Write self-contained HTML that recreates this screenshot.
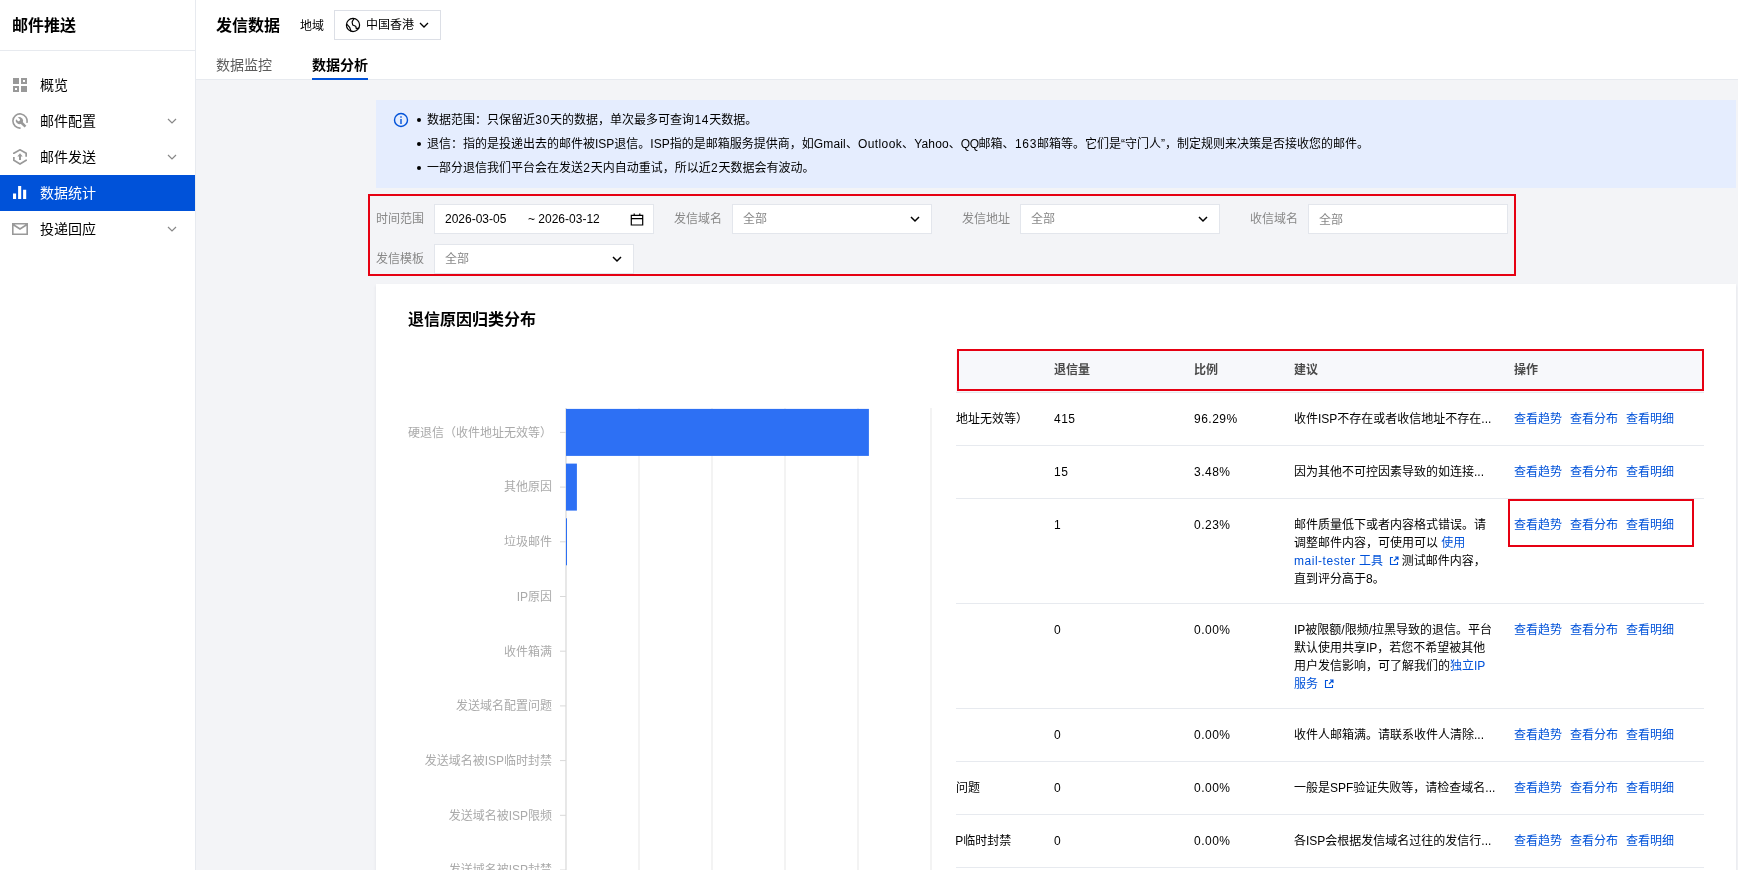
<!DOCTYPE html>
<html lang="zh-CN">
<head>
<meta charset="utf-8">
<title>邮件推送 - 发信数据</title>
<style>
*{box-sizing:border-box;margin:0;padding:0}
html,body{width:1738px;height:870px;overflow:hidden;background:#f3f4f7}
body{font-family:"Liberation Sans","Noto Sans CJK SC",sans-serif;font-size:12px;color:#000;position:relative;-webkit-font-smoothing:antialiased}
a{color:#0052d9;text-decoration:none}
.abs{position:absolute}
u{text-decoration:none;letter-spacing:.18px}
i{font-style:normal;letter-spacing:.7px;margin-left:.35px}
#app{position:absolute;left:0;top:0;width:1738px;height:870px;overflow:hidden;will-change:transform;background:#f3f4f7}
/* sidebar */
#side{position:absolute;left:0;top:0;width:196px;height:870px;background:#fff;border-right:1px solid #e7eaef}
#side .hd{position:absolute;left:0;top:0;width:195px;height:51px;border-bottom:1px solid #e7eaef}
#side .hd span{position:absolute;left:12px;top:14px;font-size:16px;line-height:24px;font-weight:700;color:#000}
.mi{position:absolute;left:0;width:195px;height:36px;font-size:14px;line-height:36px;color:#000}
.mi .tx{position:absolute;left:40px;top:0}
.mi svg.ic{position:absolute;left:12px;top:10px;width:16px;height:16px}
.mi svg.ar{position:absolute;left:167px;top:13px;width:10px;height:10px}
.mi.on{background:#0052d9;color:#fff}
/* header */
#head{position:absolute;left:196px;top:0;width:1542px;height:80px;background:#fff;border-bottom:1px solid #e7eaef}
#head h1{position:absolute;left:20px;top:14px;font-size:16px;line-height:24px;font-weight:700}
#head .rg{position:absolute;left:104px;top:17px;font-size:12px;line-height:18px}
#head .sel{position:absolute;left:138px;top:10px;width:107px;height:30px;border:1px solid #dcdfe6;background:#fff}
#head .sel span{position:absolute;left:31px;top:5px;line-height:18px;font-size:12px}
.tab{position:absolute;top:54px;font-size:14px;line-height:22px}
#t1{left:20px;color:#5c5c5c}
#t2{left:116px;font-weight:700;color:#000}
#tl{position:absolute;left:116px;top:78px;width:56px;height:2px;background:#0052d9}
/* alert */
#alert{position:absolute;left:376px;top:100px;width:1360px;height:88px;background:#e5edfe}
#alert ul{position:absolute;left:40px;top:8px;list-style:none}
#alert li{line-height:24px;height:24px;font-size:12px;color:#000;white-space:nowrap;position:relative;padding-left:11px}
#alert li:before{content:"";position:absolute;left:1px;top:10px;width:4px;height:4px;border-radius:50%;background:#000}
/* filters */
#redf{position:absolute;left:368px;top:194px;width:1148px;height:82px;border:2px solid #e60012;z-index:5}
.fl{position:absolute;font-size:12px;line-height:18px;color:#888;white-space:nowrap}
.fi{position:absolute;height:30px;background:#fff;border:1px solid #e3e6ec;font-size:12px;line-height:28px}
.fi .ph{position:absolute;left:10px;top:0;color:#888}
.fi svg.cv{position:absolute;right:11px;top:9px;width:10px;height:10px}
/* card */
#card{position:absolute;left:376px;top:284px;width:1360px;height:600px;background:#fff;box-shadow:0 2px 3px rgba(54,58,80,.1)}
#card h2{position:absolute;left:32px;top:24px;font-size:16px;line-height:24px;font-weight:700;color:#000}

#tbl{position:absolute;left:580px;top:66px;width:748px;height:540px;overflow:hidden;font-size:12px;line-height:18px;color:#000}
#tbl .th{position:absolute;left:0;top:0;width:748px;height:43px;background:#f7f8fb;border-bottom:1px solid #e7eaef;font-weight:700;color:#4a4a4a}
#tbl .th span{position:absolute;top:11px}
#tbl .tr{position:absolute;left:0;width:748px;border-bottom:1px solid #e7eaef}
#tbl .tr>*{position:absolute;top:17px;white-space:nowrap}
#tbl .c1{left:-72px}
#tbl .c2{left:98px;letter-spacing:.5px}
#tbl .c3{left:238px;letter-spacing:.5px}
#tbl .c4{left:338px}
#tbl .c5{left:558px}
#tbl .c5 a{display:inline-block;width:48px;margin-right:8px}
svg.ext{display:inline-block;width:12px;height:12px;vertical-align:-2px;margin-left:1.500px;margin-right:-1.500px}
.red{position:absolute;border:2px solid #e60012;z-index:6}
</style>
</head>
<body>
<div id="app">
<div id="side">
  <div class="hd"><span>邮件推送</span></div>
  <div class="mi" style="top:67px"><svg class="ic" viewBox="0 0 16 16"><path fill="#999" d="M1 1h6v6H1zM9 9h6v6H9zM9 1h6v6H9zm2 2v2h2V3zM1 9h6v6H1zm2 2v2h2v-2z" fill-rule="evenodd"/></svg><span class="tx">概览</span></div>
  <div class="mi" style="top:103px"><svg class="ic" viewBox="0 0 16 16"><path d="M8.620 15.070A7.100 7.100 0 1 1 14.860 9.840" fill="none" stroke="#999" stroke-width="1.6"/><g transform="translate(7.400 7.600) rotate(45)"><circle r="3.500" fill="#999"/><rect x="2" y="-1.300" width="6.600" height="2.600" fill="#999"/><rect x="-4.200" y="-1.350" width="4.400" height="2.700" rx="1" fill="#fff"/></g></svg><span class="tx">邮件配置</span><svg class="ar" viewBox="0 0 10 10"><path d="M1 3l4 4 4-4" fill="none" stroke="#888" stroke-width="1.2"/></svg></div>
  <div class="mi" style="top:139px"><svg class="ic" viewBox="0 0 16 16"><path d="M1.850 5.100V4.350L8 .800l6.150 3.550V7.800M14.150 10.600v.750L8 14.900l-6.150-3.550V7.900" fill="none" stroke="#999" stroke-width="1.7"/><path fill="#999" d="M8 4.200l2.700 3.400H9v3.300H7V7.600H5.300z"/></svg><span class="tx">邮件发送</span><svg class="ar" viewBox="0 0 10 10"><path d="M1 3l4 4 4-4" fill="none" stroke="#888" stroke-width="1.2"/></svg></div>
  <div class="mi on" style="top:175px"><svg class="ic" viewBox="0 0 16 16"><path fill="#fff" d="M1 8.400h3.100V14H1zM6.100 1.100h3.100V14H6.100zM11.100 4.800h3.100V14h-3.100z"/></svg><span class="tx">数据统计</span></div>
  <div class="mi" style="top:211px"><svg class="ic" viewBox="0 0 16 16"><path fill="none" stroke="#999" stroke-width="1.6" d="M.8 2.8h14.4v10.4H.8zM1 3.5l7 4.5 7-4.5"/></svg><span class="tx">投递回应</span><svg class="ar" viewBox="0 0 10 10"><path d="M1 3l4 4 4-4" fill="none" stroke="#888" stroke-width="1.2"/></svg></div>
</div>

<div id="head">
  <h1>发信数据</h1>
  <span class="rg">地域</span>
  <div class="sel"><svg class="abs" style="left:10px;top:6px;width:16px;height:16px" viewBox="0 0 16 16"><g fill="none" stroke="#000" stroke-width="1.200" stroke-linejoin="round"><circle cx="8" cy="8" r="6.600"/><path d="M8.900 1.500L7.100 5L7.700 8L10.700 9.200L11.300 11.600L14.200 11M1.500 6.800L4.700 10.400L5.900 14L8.300 14.500"/></g></svg><span>中国香港</span><svg class="abs" style="left:84px;top:8.500px;width:10px;height:10px" viewBox="0 0 10 10"><path d="M1 3l4 4 4-4" fill="none" stroke="#000" stroke-width="1.3"/></svg></div>
  <span class="tab" id="t1">数据监控</span>
  <span class="tab" id="t2">数据分析</span>
  <div id="tl"></div>
</div>

<div id="alert">
  <svg class="abs" style="left:17px;top:12px;width:16px;height:16px" viewBox="0 0 16 16"><circle cx="8" cy="8" r="6.500" fill="none" stroke="#0052d9" stroke-width="1.400"/><path d="M7.3 7h1.4v5H7.300zM7.300 4.200h1.400v1.500H7.300z" fill="#0052d9"/></svg>
  <ul>
    <li>数据范围：只保留近<i>30</i>天的数据，单次最多可查询<i>14</i>天数据。</li>
    <li>退信：指的是投递出去的邮件被ISP退信。ISP指的是邮箱服务提供商，如<u>Gmail</u>、<u style="letter-spacing:.4px">Outlook</u>、<u>Yahoo</u>、<u style="letter-spacing:-.5px">QQ</u>邮箱、<i>163</i>邮箱等。它们是“守门人”，制定规则来决策是否接收您的邮件。</li>
    <li>一部分退信我们平台会在发送<i>2</i>天内自动重试，所以近<i>2</i>天数据会有波动。</li>
  </ul>
</div>

<div id="redf"></div>
<span class="fl" style="left:376px;top:210px">时间范围</span>
<div class="fi" style="left:434px;top:204px;width:220px;color:#000"><span class="abs" style="left:10px;top:0">2026-03-05</span><span class="abs" style="left:93px;top:0">~ 2026-03-12</span><svg class="abs" style="left:194px;top:6px;width:16px;height:16px" viewBox="0 0 16 16"><path fill="none" stroke="#000" stroke-width="1.200" d="M2.300 4.400h11.400v9.600H2.300zM2.300 7.600h11.400M5.200 2.400v2.400M10.800 2.400v2.400"/></svg></div>
<span class="fl" style="left:674px;top:210px">发信域名</span>
<div class="fi" style="left:732px;top:204px;width:200px"><span class="ph">全部</span><svg class="cv" viewBox="0 0 10 10"><path d="M1 3l4 4 4-4" fill="none" stroke="#000" stroke-width="1.5"/></svg></div>
<span class="fl" style="left:962px;top:210px">发信地址</span>
<div class="fi" style="left:1020px;top:204px;width:200px"><span class="ph">全部</span><svg class="cv" viewBox="0 0 10 10"><path d="M1 3l4 4 4-4" fill="none" stroke="#000" stroke-width="1.5"/></svg></div>
<span class="fl" style="left:1250px;top:210px">收信域名</span>
<div class="fi" style="left:1308px;top:204px;width:200px"><span class="ph" style="left:10px;top:1px">全部</span></div>
<span class="fl" style="left:376px;top:250px">发信模板</span>
<div class="fi" style="left:434px;top:244px;width:200px"><span class="ph">全部</span><svg class="cv" viewBox="0 0 10 10"><path d="M1 3l4 4 4-4" fill="none" stroke="#000" stroke-width="1.5"/></svg></div>

<div id="card">
  <h2>退信原因归类分布</h2>
  <svg id="chart" class="abs" style="left:0;top:0;width:580px;height:600px" viewBox="376 284 580 600" font-family="'Liberation Sans','Noto Sans CJK SC',sans-serif" font-size="12">
<path d="M639 408V884" stroke="#f3f3f3" stroke-width="2" fill="none"/>
<path d="M712 408V884" stroke="#f3f3f3" stroke-width="2" fill="none"/>
<path d="M785 408V884" stroke="#f3f3f3" stroke-width="2" fill="none"/>
<path d="M858 408V884" stroke="#f3f3f3" stroke-width="2" fill="none"/>
<path d="M931 408V884" stroke="#f3f3f3" stroke-width="2" fill="none"/>
<path d="M566 408V884" stroke="#e2e2e2" stroke-width="1.600" fill="none"/>
<path d="M560 432.4H566" stroke="#d9d9d9" stroke-width="1" fill="none"/>
<text x="552" y="436.7" text-anchor="end" fill="#aaaaaa">硬退信（收件地址无效等）</text>
<rect x="566" y="408.9" width="302.9" height="47" fill="#2d70f4"/>
<path d="M560 487.1H566" stroke="#d9d9d9" stroke-width="1" fill="none"/>
<text x="552" y="491.4" text-anchor="end" fill="#aaaaaa">其他原因</text>
<rect x="566" y="463.6" width="10.9" height="47" fill="#2d70f4"/>
<path d="M560 541.8H566" stroke="#d9d9d9" stroke-width="1" fill="none"/>
<text x="552" y="546.1" text-anchor="end" fill="#aaaaaa">垃圾邮件</text>
<rect x="566" y="518.3" width="1.0" height="47" fill="#2d70f4"/>
<path d="M560 596.5H566" stroke="#d9d9d9" stroke-width="1" fill="none"/>
<text x="552" y="600.8" text-anchor="end" fill="#aaaaaa">IP原因</text>
<path d="M560 651.2H566" stroke="#d9d9d9" stroke-width="1" fill="none"/>
<text x="552" y="655.5" text-anchor="end" fill="#aaaaaa">收件箱满</text>
<path d="M560 705.9H566" stroke="#d9d9d9" stroke-width="1" fill="none"/>
<text x="552" y="710.2" text-anchor="end" fill="#aaaaaa">发送域名配置问题</text>
<path d="M560 760.6H566" stroke="#d9d9d9" stroke-width="1" fill="none"/>
<text x="552" y="764.9" text-anchor="end" fill="#aaaaaa">发送域名被ISP临时封禁</text>
<path d="M560 815.3H566" stroke="#d9d9d9" stroke-width="1" fill="none"/>
<text x="552" y="819.6" text-anchor="end" fill="#aaaaaa">发送域名被ISP限频</text>
<path d="M560 870.0H566" stroke="#d9d9d9" stroke-width="1" fill="none"/>
<text x="552" y="874.3" text-anchor="end" fill="#aaaaaa">发送域名被ISP封禁</text>
</svg>
  <div id="tbl">
<div class="th"><span style="left:98px">退信量</span><span style="left:238px">比例</span><span style="left:338px">建议</span><span style="left:558px">操作</span></div>
<div class="tr" style="top:43px;height:53px"><span class="c1">硬退信（收件地址无效等）</span><span class="c2">415</span><span class="c3">96.29%</span><div class="c4">收件ISP不存在或者收信地址不存在...</div><span class="c5"><a>查看趋势</a><a>查看分布</a><a>查看明细</a></span></div>
<div class="tr" style="top:96px;height:53px"><span class="c1">其他原因</span><span class="c2">15</span><span class="c3">3.48%</span><div class="c4">因为其他不可控因素导致的如连接...</div><span class="c5"><a>查看趋势</a><a>查看分布</a><a>查看明细</a></span></div>
<div class="tr" style="top:149px;height:105px"><span class="c1">垃圾邮件</span><span class="c2">1</span><span class="c3">0.23%</span><div class="c4">邮件质量低下或者内容格式错误。请<br>调整邮件内容，可使用可以 <a>使用</a><br><a><span style="letter-spacing:.52px">mail-tester</span> 工具 <svg class="ext" viewBox="0 0 12 12"><path d="M5 2.500H2.500v7h7V7M7 2h3v3M10 2L6 6" fill="none" stroke="#0052d9" stroke-width="1.100"/></svg></a> 测试邮件内容，<br>直到评分高于8。</div><span class="c5"><a>查看趋势</a><a>查看分布</a><a>查看明细</a></span></div>
<div class="tr" style="top:254px;height:105px"><span class="c1">IP原因</span><span class="c2">0</span><span class="c3">0.00%</span><div class="c4">IP被限额/限频/拉黑导致的退信。平台<br>默认使用共享IP，若您不希望被其他<br>用户发信影响，可了解我们的<a>独立IP</a><br><a>服务 <svg class="ext" viewBox="0 0 12 12"><path d="M5 2.500H2.500v7h7V7M7 2h3v3M10 2L6 6" fill="none" stroke="#0052d9" stroke-width="1.100"/></svg></a></div><span class="c5"><a>查看趋势</a><a>查看分布</a><a>查看明细</a></span></div>
<div class="tr" style="top:359px;height:53px"><span class="c1">收件箱满</span><span class="c2">0</span><span class="c3">0.00%</span><div class="c4">收件人邮箱满。请联系收件人清除...</div><span class="c5"><a>查看趋势</a><a>查看分布</a><a>查看明细</a></span></div>
<div class="tr" style="top:412px;height:53px"><span class="c1">发送域名配置问题</span><span class="c2">0</span><span class="c3">0.00%</span><div class="c4">一般是SPF验证失败等，请检查域名...</div><span class="c5"><a>查看趋势</a><a>查看分布</a><a>查看明细</a></span></div>
<div class="tr" style="top:465px;height:53px"><span class="c1">发送域名被ISP临时封禁</span><span class="c2">0</span><span class="c3">0.00%</span><div class="c4">各ISP会根据发信域名过往的发信行...</div><span class="c5"><a>查看趋势</a><a>查看分布</a><a>查看明细</a></span></div>
<div class="tr" style="top:518px;height:53px"><span class="c1">发送域名被ISP限频</span><span class="c2">0</span><span class="c3">0.00%</span><div class="c4">ISP对发信域名的发信频率进行了...</div><span class="c5"><a>查看趋势</a><a>查看分布</a><a>查看明细</a></span></div>
</div>
</div>
<div class="red" style="left:957px;top:349px;width:747px;height:42px"></div>
<div class="red" style="left:1508px;top:499px;width:186px;height:48px"></div>
</div>
</body>
</html>
